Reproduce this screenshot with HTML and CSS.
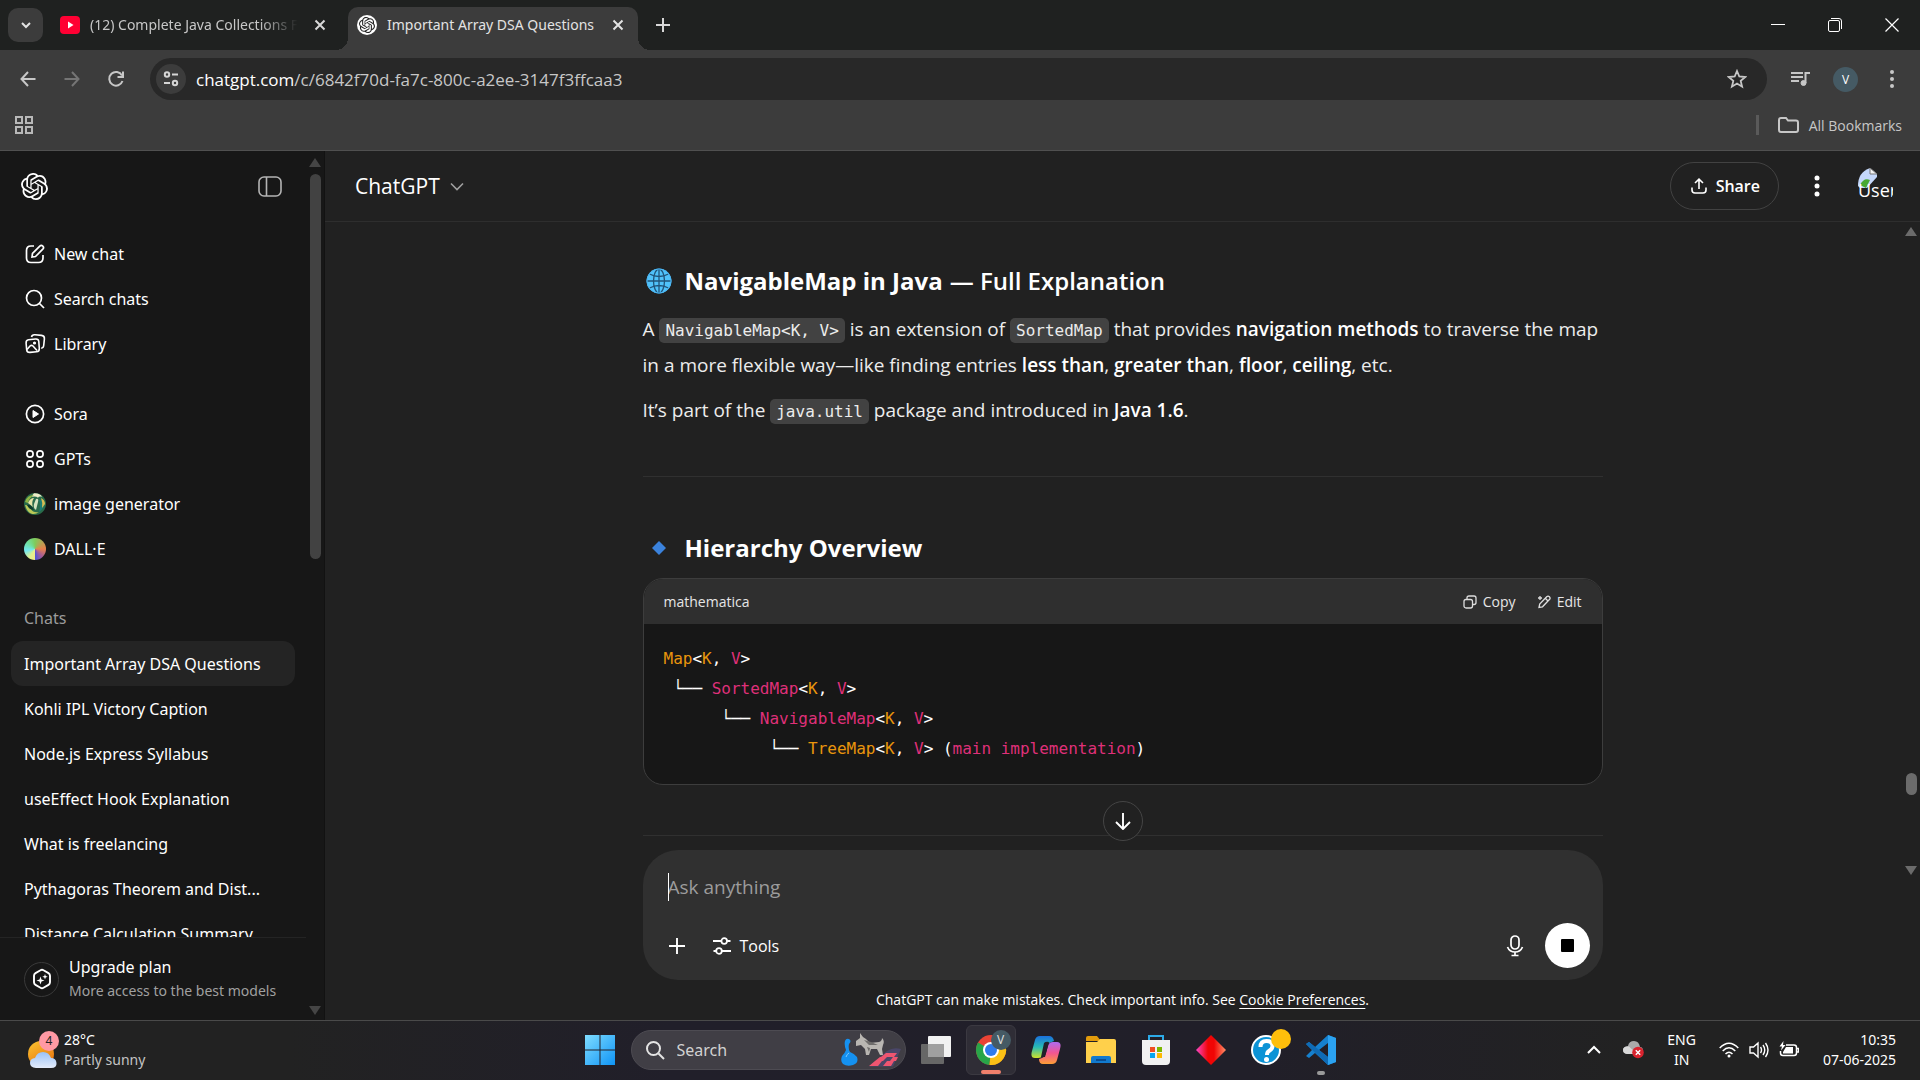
FILE: index.html
```html
<!DOCTYPE html>
<html lang="en">
<head>
<meta charset="utf-8">
<title>Important Array DSA Questions</title>
<link rel="stylesheet" href="styles.css">
</head>
<body>
<svg class="sprite" aria-hidden="true">
  <symbol id="openai" viewBox="0 0 24 24"><path fill="currentColor" d="M22.2819 9.8211a5.9847 5.9847 0 0 0-.5157-4.9108 6.0462 6.0462 0 0 0-6.5098-2.9A6.0651 6.0651 0 0 0 4.9807 4.1818a5.9847 5.9847 0 0 0-3.9977 2.9 6.0462 6.0462 0 0 0 .7427 7.0966 5.98 5.98 0 0 0 .511 4.9107 6.051 6.051 0 0 0 6.5146 2.9001A5.9847 5.9847 0 0 0 13.2599 24a6.0557 6.0557 0 0 0 5.7718-4.2058 5.9894 5.9894 0 0 0 3.9977-2.9001 6.0557 6.0557 0 0 0-.7475-7.0729zm-9.022 12.6081a4.4755 4.4755 0 0 1-2.8764-1.0408l.1419-.0804 4.7783-2.7582a.7948.7948 0 0 0 .3927-.6813v-6.7369l2.02 1.1686a.071.071 0 0 1 .038.052v5.5826a4.504 4.504 0 0 1-4.4945 4.4944zm-9.6607-4.1254a4.4708 4.4708 0 0 1-.5346-3.0137l.142.0852 4.783 2.7582a.7712.7712 0 0 0 .7806 0l5.8428-3.3685v2.3324a.0804.0804 0 0 1-.0332.0615L9.74 19.9502a4.4992 4.4992 0 0 1-6.1408-1.6464zM2.3408 7.8956a4.485 4.485 0 0 1 2.3655-1.9728V11.6a.7664.7664 0 0 0 .3879.6765l5.8144 3.3543-2.0201 1.1685a.0757.0757 0 0 1-.071 0l-4.8303-2.7865A4.504 4.504 0 0 1 2.3408 7.872zm16.5963 3.8558L13.1038 8.364 15.1192 7.2a.0757.0757 0 0 1 .071 0l4.8303 2.7913a4.4944 4.4944 0 0 1-.6765 8.1042v-5.6772a.79.79 0 0 0-.407-.667zm2.0107-3.0231l-.142-.0852-4.7735-2.7818a.7759.7759 0 0 0-.7854 0L9.409 9.2297V6.8974a.0662.0662 0 0 1 .0284-.0615l4.8303-2.7866a4.4992 4.4992 0 0 1 6.6802 4.66zM8.3065 12.863l-2.02-1.1638a.0804.0804 0 0 1-.038-.0567V6.0742a4.4992 4.4992 0 0 1 7.3757-3.4537l-.142.0805L8.704 5.459a.7948.7948 0 0 0-.3927.6813zm1.0976-2.3654l2.602-1.4998 2.6069 1.4998v2.9994l-2.5974 1.4997-2.6067-1.4997Z"/></symbol>
</svg>

<header class="browser">
  <div class="tabstrip">
    <button class="tab-search" aria-label="Search tabs"><svg width="12" height="12" viewBox="0 0 12 12" fill="none" stroke="#e3e3e3" stroke-width="2"><path d="M2 4l4 4 4-4"/></svg></button>
    <div class="tab">
      <svg width="20" height="20" viewBox="0 0 20 20"><rect y="1" width="20" height="18" rx="4" fill="#f03"/><path d="M8 6.500l5.500 3.500L8 13.500z" fill="#fff"/></svg>
      <span class="tab-title tab-title-faded">(12) Complete Java Collections F</span>
      <button class="icon-btn tab-close" aria-label="Close tab"><svg width="12" height="12" viewBox="0 0 12 12" stroke="#d8d8d8" stroke-width="2"><path d="M1.500 1.500l9 9M10.500 1.500l-9 9"/></svg></button>
    </div>
    <div class="tab tab-active">
      <span class="favicon"><svg width="16" height="16"><use href="#openai"/></svg></span>
      <span class="tab-title">Important Array DSA Questions</span>
      <button class="icon-btn tab-close" aria-label="Close tab"><svg width="12" height="12" viewBox="0 0 12 12" stroke="#e3e3e3" stroke-width="2"><path d="M1.500 1.500l9 9M10.500 1.500l-9 9"/></svg></button>
    </div>
    <button class="icon-btn new-tab" aria-label="New tab"><svg width="14" height="14" viewBox="0 0 14 14" stroke="#d8d8d8" stroke-width="2"><path d="M7 0v14M0 7h14"/></svg></button>
    <div class="window-controls">
      <button class="icon-btn" aria-label="Minimize"><svg width="14" height="14" viewBox="0 0 14 14" stroke="#fff"><path d="M0 6.500h14"/></svg></button>
      <button class="icon-btn" aria-label="Restore"><svg width="14" height="14" viewBox="0 0 14 14" fill="none" stroke="#fff"><rect x=".5" y="2.500" width="11" height="11" rx="1.500"/><path d="M3 .5h8q2.500 0 2.500 2.500v8"/></svg></button>
      <button class="icon-btn" aria-label="Close"><svg width="14" height="14" viewBox="0 0 14 14" stroke="#fff" stroke-width="1.200"><path d="M.5.5l13 13M13.500.5l-13 13"/></svg></button>
    </div>
  </div>
  <div class="toolbar">
    <div class="nav-buttons">
      <button class="icon-btn" aria-label="Back"><svg width="16" height="16" viewBox="0 0 16 16" fill="none" stroke="#c7c7c7" stroke-width="2"><path d="M15.500 8H2M8 1L1.500 8 8 15"/></svg></button>
      <button class="icon-btn" aria-label="Forward"><svg width="16" height="16" viewBox="0 0 16 16" fill="none" stroke="#757575" stroke-width="2"><path d="M.5 8H14M8 1l6.500 7L8 15"/></svg></button>
      <button class="icon-btn" aria-label="Reload"><svg width="18" height="18" viewBox="0 0 18 18" fill="none" stroke="#c7c7c7" stroke-width="2"><path d="M15.500 11A6.800 6.800 0 1 1 15 5.500M16 1.500V7h-5.500"/></svg></button>
    </div>
    <div class="address">
      <button class="site-info" aria-label="Site information"><svg width="18" height="18" viewBox="0 0 18 18" fill="none" stroke="#d5d5d5" stroke-width="2"><circle cx="5" cy="4.500" r="2.200"/><path d="M10 4.500h6M2 13h6"/><circle cx="13" cy="13" r="2.200"/></svg></button>
      <a class="url" href="#"><span class="url-host">chatgpt.com</span>/c/6842f70d-fa7c-800c-a2ee-3147f3ffcaa3</a>
      <button class="icon-btn" aria-label="Bookmark"><svg width="20" height="20" viewBox="0 0 20 20" fill="none" stroke="#c7c7c7" stroke-width="1.800"><path d="M10 2l2.300 5.500 6 .5-4.600 3.900 1.400 5.800L10 14.600l-5.100 3.100 1.400-5.800L1.700 8l6-.5z"/></svg></button>
    </div>
    <div class="toolbar-actions">
      <button class="icon-btn" aria-label="Media"><svg width="20" height="16" viewBox="0 0 20 16" fill="none" stroke="#c7c7c7" stroke-width="2"><path d="M0 2h12M0 6h12M0 10h8M14.500 12V2H19"/><circle cx="12.500" cy="12" r="2.500" fill="#c7c7c7" stroke-width="1"/></svg></button>
      <button class="profile" aria-label="Profile">V</button>
      <button class="icon-btn menu" aria-label="Menu"><svg width="6" height="20" viewBox="0 0 6 20" fill="#c7c7c7"><circle cx="3" cy="3" r="2"/><circle cx="3" cy="10" r="2"/><circle cx="3" cy="17" r="2"/></svg></button>
    </div>
  </div>
  <div class="bookmarks">
    <button class="icon-btn" aria-label="Apps"><svg width="18" height="18" viewBox="0 0 18 18" fill="none" stroke="#b8b8b8" stroke-width="2"><path d="M1 1h6v6H1zM11 1h6v6h-6zM1 11h6v6H1zM11 11h6v6h-6z"/></svg></button>
    <button class="all-bookmarks"><svg width="21" height="16" viewBox="0 0 21 16" fill="none" stroke="#c7c7c7" stroke-width="2"><path d="M1 3q0-2 2-2h5l2 2.500h8q2 0 2 2V13q0 2-2 2H3q-2 0-2-2z"/></svg>All Bookmarks</button>
  </div>
</header>

<div class="app">
  <aside class="sidebar">
    <div class="sidebar-main">
      <div class="sidebar-top">
        <a href="#" class="logo" aria-label="Home"><svg width="27" height="27"><use href="#openai"/></svg></a>
        <button class="icon-btn" aria-label="Toggle sidebar"><svg width="24" height="21" viewBox="0 0 24 21" fill="none" stroke="#b4b4b4" stroke-width="1.600"><rect x="1" y="1" width="22" height="19" rx="5"/><path d="M8.500 1v19"/></svg></button>
      </div>
      <nav class="sidebar-scroll">
        <ul class="nav-list">
          <li><a href="#"><svg width="22" height="22" viewBox="0 0 22 22" fill="none" stroke="#fff" stroke-width="1.700"><path d="M10 3H7Q2.500 3 2.500 7.500V15q0 4.500 4.500 4.500h7.500q4.500 0 4.500-4.500v-3"/><path d="M8 14l.5-3.500 7.300-7.300a2.100 2.100 0 0 1 3 3L11.500 13.500z"/></svg>New chat</a></li>
          <li><a href="#"><svg width="22" height="22" viewBox="0 0 22 22" fill="none" stroke="#fff" stroke-width="1.700"><circle cx="10" cy="10" r="7.500"/><path d="M15.500 15.500l4.500 4.500"/></svg>Search chats</a></li>
          <li><a href="#"><svg width="22" height="22" viewBox="0 0 22 22" fill="none" stroke="#fff" stroke-width="1.600"><path d="M4.500 6.800l7-.8q3-.3 3.300 2.500l.5 7q.2 3-2.800 3.300l-6.500.6q-3 .2-3.300-2.600l-.6-6.500q-.2-3.200 2.400-3.500z"/><path d="M3 16.500l3-3.500q1.500-1.400 3 0l4 4.500"/><circle cx="10.500" cy="10" r=".8" fill="#fff"/><path d="M7.500 4Q8 1.500 11 1.800l6.500.6q3.200.4 2.900 3.400l-.7 6.700q-.3 2.500-2.500 2.700"/></svg>Library</a></li>
        </ul>
        <ul class="nav-list">
          <li><a href="#"><svg width="22" height="22" viewBox="0 0 22 22" fill="none" stroke="#fff" stroke-width="1.700"><circle cx="11" cy="11" r="8.600"/><path d="M9 7.500l5.500 3.500L9 14.500z" fill="#fff" stroke-width="1"/></svg>Sora</a></li>
          <li><a href="#"><svg width="22" height="22" viewBox="0 0 22 22" fill="none" stroke="#fff" stroke-width="1.700"><circle cx="6" cy="6" r="3.100"/><circle cx="16" cy="6" r="3.100"/><circle cx="6" cy="16" r="3.100"/><circle cx="16" cy="16" r="3.100"/></svg>GPTs</a></li>
          <li><a href="#"><svg width="22" height="22" viewBox="0 0 22 22"><circle cx="11" cy="11" r="11" fill="#2a6b4a"/><path d="M10 .3q6-.3 8 3.500-3-1-4 1-2-2-6-1 0-2 2-3.500z" fill="#efecc8"/><path d="M1 9q2-7 9-7-5 3-6 8z" fill="#8fb544"/><path d="M4 10q2-5 6-5-3 4-1 9z" fill="#e6e3a6"/><path d="M12 6q3-1 2 3t-2 8q-3-2-2-6z" fill="#d5e3c0"/><path d="M15 7q4-1 6 3-1 6-6 9 2-6 0-12z" fill="#1d7d74"/><path d="M1 12q4 0 6 4t8 3q-4 3-8 1.500T1 12z" fill="#bac857"/><path d="M3 12q4-1 7 5-5 0-7-5z" fill="#0d3a2c"/><path d="M17 5q4 2 4 6l-3 4q1-5-1-10z" fill="#d8bd52"/></svg>image generator</a></li>
          <li><a href="#"><span class="dalle"></span>DALL·E</a></li>
        </ul>
        <h2 class="chats-label">Chats</h2>
        <ul class="chat-list">
          <li><a class="current" href="#">Important Array DSA Questions</a></li>
          <li><a href="#">Kohli IPL Victory Caption</a></li>
          <li><a href="#">Node.js Express Syllabus</a></li>
          <li><a href="#">useEffect Hook Explanation</a></li>
          <li><a href="#">What is freelancing</a></li>
          <li><a href="#">Pythagoras Theorem and Dist...</a></li>
          <li><a href="#">Distance Calculation Summary</a></li>
        </ul>
      </nav>
      <button class="upgrade">
        <span class="upgrade-icon"><svg width="22" height="22" viewBox="0 0 22 22" fill="none" stroke="#fff" stroke-width="1.900"><path d="M9.500 2.200q1.500-.9 3 0l5 2.900q1.500.9 1.500 2.600v6.600q0 1.700-1.500 2.600l-5 2.900q-1.500.9-3 0l-5-2.900Q3 16 3 14.300V7.700q0-1.700 1.500-2.600z"/><path d="M9.500 8.500l1 3 3 1-3 1-1 3-1-3-3-1 3-1z" fill="#fff" stroke="none"/><path d="M14 6l.7 2 2 .7-2 .7-.7 2-.7-2-2-.7 2-.7z" fill="#fff" stroke="none"/></svg></span>
        <span class="upgrade-text"><span>Upgrade plan</span><small>More access to the best models</small></span>
      </button>
    </div>
    <div class="scrollbar sidebar-bar" aria-hidden="true">
      <span class="arrow arrow-up"></span><span class="thumb"></span><span class="arrow arrow-down"></span>
    </div>
  </aside>

  <main class="main">
    <div class="chat-header">
      <button class="model">ChatGPT<svg width="14" height="9" viewBox="0 0 14 9" fill="none" stroke="#a0a0a0" stroke-width="1.600"><path d="M1 1.500l6 6 6-6"/></svg></button>
      <div class="chat-actions">
        <button class="share"><svg width="16" height="16" viewBox="0 0 16 16" fill="none" stroke="#fff" stroke-width="1.600"><path d="M8 11V1.500M4 5l4-3.800L12 5M1 9.500V12q0 3 3 3h8q3 0 3-3V9.500"/></svg>Share</button>
        <button class="icon-btn" aria-label="More"><svg width="6" height="22" viewBox="0 0 6 22" fill="#fff"><circle cx="3" cy="3" r="2.500"/><circle cx="3" cy="11" r="2.500"/><circle cx="3" cy="19" r="2.500"/></svg></button>
        <button class="avatar" aria-label="Account"><svg width="20" height="20" viewBox="0 0 20 20"><path d="M0 18Q0 4 12 0l7 6v3L9 20H2z" fill="#c5d8fb"/><path d="M2 17q4-8 10-5l-4 8z" fill="#47a832"/><path d="M12 0v6h7z" fill="#f4f4f4" stroke="#777"/></svg><span>User</span></button>
      </div>
    </div>

    <div class="chat-body">
      <div class="thread">
        <article class="message">
          <h2><svg class="emoji" width="26" height="26" viewBox="0 0 26 26"><circle cx="13" cy="13" r="12.500" fill="#50c2fa"/><g fill="none" stroke="#21547a" stroke-width="1.300"><ellipse cx="13" cy="13" rx="5.500" ry="12"/><path d="M13 1v24M1 13h24M3.500 6q9.500 5 19 0M3.500 20q9.500-5 19 0"/></g><circle cx="13" cy="13" r="12" fill="none" stroke="#4cb5f3"/></svg><strong>NavigableMap in Java</strong> — Full Explanation</h2>
          <p>A <code>NavigableMap&lt;K, V&gt;</code> is an extension of <code>SortedMap</code> that provides <strong>navigation methods</strong> to traverse the map in a more flexible way—like finding entries <strong>less than</strong>, <strong>greater than</strong>, <strong>floor</strong>, <strong>ceiling</strong>, etc.</p>
          <p>It’s part of the <code>java.util</code> package and introduced in <strong>Java 1.6</strong>.</p>
          <hr>
          <h2><svg class="emoji" width="26" height="26" viewBox="0 0 26 26"><path d="M13 6l7 7-7 7-7-7z" fill="#3b82dc"/></svg><strong>Hierarchy Overview</strong></h2>
          <div class="code-block">
            <div class="code-head">
              <span>mathematica</span>
              <div class="code-actions">
                <button><svg width="14" height="14" viewBox="0 0 14 14" fill="none" stroke="#ddd" stroke-width="1.300"><rect x="1" y="4.500" width="8.500" height="8.500" rx="2"/><path d="M4 4V3q0-2 2-2h5q2 0 2 2v4.500q0 2-2 2h-1"/></svg>Copy</button>
                <button><svg width="14" height="14" viewBox="0 0 14 14" fill="none" stroke="#ddd" stroke-width="1.300"><path d="M2 12.500l.7-3.500 7-7.200a1.900 1.900 0 0 1 2.700 2.700L5.500 11.800zM8.500 3.500L11 6"/><path d="M3 1v4M1 3h4"/></svg>Edit</button>
              </div>
            </div>
            <pre><span class="ty">Map</span>&lt;<span class="ty">K</span>, <span class="id">V</span>&gt;
 └── <span class="id">SortedMap</span>&lt;<span class="ty">K</span>, <span class="id">V</span>&gt;
      └── <span class="id">NavigableMap</span>&lt;<span class="ty">K</span>, <span class="id">V</span>&gt;
           └── <span class="ty">TreeMap</span>&lt;<span class="ty">K</span>, <span class="id">V</span>&gt; (<span class="id">main implementation</span>)</pre>
          </div>
          <hr class="last-rule">
          <button class="to-bottom" aria-label="Scroll to bottom"><svg width="18" height="18" viewBox="0 0 18 18" fill="none" stroke="#fff" stroke-width="1.900"><path d="M9 1v15.500M2 10l7 7 7-7"/></svg></button>
        </article>
      </div>
      <div class="scrollbar main-bar" aria-hidden="true">
        <span class="arrow arrow-up"></span><span class="thumb"></span><span class="arrow arrow-down"></span>
      </div>
    </div>

    <div class="composer-wrap">
      <form class="composer">
        <div class="prompt">
          <textarea rows="1" placeholder="Ask anything" aria-label="Message"></textarea>
          <span class="caret"></span>
        </div>
        <div class="composer-row">
          <button type="button" class="icon-btn" aria-label="Add"><svg width="18" height="18" viewBox="0 0 18 18" stroke="#fff" stroke-width="1.900"><path d="M9 1v16M1 9h16"/></svg></button>
          <button type="button" class="tools"><svg width="18" height="18" viewBox="0 0 18 18" fill="none" stroke="#fff" stroke-width="1.800"><path d="M0 4h8M14 4h3.500M.5 14h2.500M9 14h9"/><circle cx="11.200" cy="4" r="2.800"/><circle cx="6" cy="14" r="2.800"/></svg>Tools</button>
          <button type="button" class="icon-btn mic" aria-label="Dictate"><svg width="18" height="22" viewBox="0 0 18 22" fill="none" stroke="#fff" stroke-width="1.700"><rect x="5" y="1" width="8" height="13" rx="4"/><path d="M1.500 12q2 5 7.500 5t7.500-5M9 17v3.500M5.500 20.500h7"/></svg></button>
          <button type="button" class="stop" aria-label="Stop"><span></span></button>
        </div>
      </form>
      <p class="disclaimer">ChatGPT can make mistakes. Check important info. See <a href="#">Cookie Preferences</a>.</p>
    </div>
  </main>
</div>

<footer class="taskbar">
  <button class="weather">
    <span class="weather-icon"><svg width="30" height="38" viewBox="0 0 30 38"><defs><linearGradient id="sun" x1="0" y1="0" x2="0.600" y2="1"><stop offset="0" stop-color="#fcc531"/><stop offset="1" stop-color="#e8770f"/></linearGradient><linearGradient id="cl" x1="0" y1="0" x2="0" y2="1"><stop offset="0" stop-color="#9ac2f6"/><stop offset="1" stop-color="#e4ecfb"/></linearGradient></defs><circle cx="13" cy="23" r="13" fill="url(#sun)"/><path d="M8 37q-6-.5-6-5t5-5q2-6 8-6t8 6q5 0 5.500 5t-5.500 5z" fill="url(#cl)"/></svg><span class="badge">4</span></span>
    <span class="two-line"><span>28°C</span><span class="dim">Partly sunny</span></span>
  </button>
  <div class="dock">
    <button class="icon-btn dock-app start" aria-label="Start"><svg width="30" height="30" viewBox="0 0 30 30"><defs><linearGradient id="win" x1="0" y1="0" x2="1" y2="1"><stop offset="0" stop-color="#7fdcff"/><stop offset="1" stop-color="#0f94f5"/></linearGradient></defs><path fill="url(#win)" d="M0 0h14.500v14.500H0zM15.500 0H30v14.500H15.500zM0 15.500h14.500V30H0zM15.500 15.500H30V30H15.500z"/></svg></button>
    <label class="task-search">
      <svg width="20" height="20" viewBox="0 0 20 20" fill="none" stroke="#e4e4e4" stroke-width="2"><circle cx="8.500" cy="8.500" r="6.500"/><path d="M13.500 13.500L19 19"/></svg>
      <input type="text" placeholder="Search" aria-label="Search">
      <svg width="60" height="34" viewBox="0 0 60 34"><path d="M28 33.500L46 18q6-4 14-2l-8 17.500z" fill="#4a4668"/><path d="M34 28l5-4h7l-4 4zM49 28l3-4h5l-2 4zM42 33l4-5h7l-3 5zM46 24l4-4h6l-3 4zM40 24l5-4h5l-4 4zM28 33l6-5h7l-4 5z" fill="#ee5570"/><path d="M4 8q1-3 4-2 3 2 0 5-1 5 1 8 5 2 7 5 2 6-4 8-6 2-10-1-3-3-1-8 3-3 4-6-2-5-1-9z" fill="#1591f0"/><path d="M5 24q1-3 3-4" stroke="#7cc8ff" fill="none"/><path d="M15 8l4-3V0l3 4 3 2 4 4 9-1q3-1 3-4 3 3 1 7l-1 4 1 6h-3l-3-6h-6l-2 6h-3l-1-6-4-4-5 1z" fill="#b9b6b2"/><path d="M23 7l5 5 9 0-7-3zM26 14l3 1-1 4z" fill="#6f6d6c"/></svg>
    </label>
    <button class="icon-btn dock-app" aria-label="Task view"><svg width="32" height="30" viewBox="0 0 32 30"><rect x="8" y="1" width="23" height="21" rx="1" fill="#f2f2f2"/><rect x="1" y="9" width="23" height="20" rx="1" fill="#676767"/><path d="M8 9h16v13H8z" fill="#a0a0a0"/></svg></button>
    <button class="icon-btn dock-app running" aria-label="Chrome"><svg width="32" height="32" viewBox="0 0 32 32"><circle cx="16" cy="16" r="15" fill="#ea4335"/><path d="M16 16L3 8.500A15 15 0 0 0 14.500 31z" fill="#28a549"/><path d="M16 16l-1.500 15A15 15 0 0 0 29 8.500H16z" fill="#fbc116"/><circle cx="16" cy="16" r="8" fill="#fff"/><circle cx="16" cy="16" r="6" fill="#2f7bed"/></svg><span class="user-badge">V</span></button>
    <button class="icon-btn dock-app" aria-label="Copilot"><svg width="30" height="28" viewBox="0 0 30 28"><defs><linearGradient id="c1" x1="0" y1="0" x2="0" y2="1"><stop offset="0" stop-color="#1b70dd"/><stop offset=".5" stop-color="#27bab5"/><stop offset="1" stop-color="#cde22b"/></linearGradient><linearGradient id="c2" x1="0" y1="0" x2="0" y2="1"><stop offset="0" stop-color="#ae6bf0"/><stop offset=".5" stop-color="#f35591"/><stop offset="1" stop-color="#fd9e35"/></linearGradient></defs><path d="M9 0h9q4 0 5 5l-5 2q-3 0-4 4l-2 8q-1 3-5 3H4q-5 0-3-7L4 4q1-4 5-4z" fill="url(#c1)"/><path d="M21 28h-9q-4 0-4-5l3-1q3-1 4-5l2-7q1-4 5-4h4q5 0 3 7l-3 11q-1 4-5 4z" fill="url(#c2)"/><path d="M13 7q2-2 5-1l-4 15h-4z" fill="#22202a"/></svg></button>
    <button class="icon-btn dock-app" aria-label="File Explorer"><svg width="32" height="28" viewBox="0 0 32 28"><path d="M1 2q0-2 2-2h9l4 5H1z" fill="#e29b0c"/><path d="M1 6h11l3-3h14q2 0 2 2v22H1z" fill="#ffd04b"/><path d="M6 27v-5q0-2 2-2h16q2 0 2 2v5z" fill="#127ace"/><path d="M11 24h10" stroke="#0a4e93" stroke-width="2"/></svg></button>
    <button class="icon-btn dock-app" aria-label="Store"><svg width="30" height="30" viewBox="0 0 30 30"><path d="M8 6V1h14v5" fill="none" stroke="#2caae8" stroke-width="2"/><path d="M1 5h28v21q0 4-4 4H5q-4 0-4-4z" fill="#f1f1f1"/><path d="M9 12h5v5H9z" fill="#f04e23"/><path d="M16 12h5v5h-5z" fill="#7db801"/><path d="M9 18h5v5H9z" fill="#06a5ef"/><path d="M16 18h5v5h-5z" fill="#fdb900"/></svg></button>
    <button class="icon-btn dock-app" aria-label="Diamond"><svg width="30" height="30" viewBox="0 0 30 30"><defs><linearGradient id="dm"><stop offset="0" stop-color="#fa48c8"/><stop offset=".4" stop-color="#f00505"/><stop offset=".6" stop-color="#f00505"/><stop offset="1" stop-color="#ff9068"/></linearGradient></defs><path d="M15 0l15 15-15 15L0 15z" fill="url(#dm)"/></svg></button>
    <button class="icon-btn dock-app" aria-label="Help"><svg width="30" height="30" viewBox="0 0 30 30"><circle cx="15" cy="15" r="14" fill="#0c93d6" stroke="#fff" stroke-width="2"/><path d="M9.500 12q0-6 6-6t6 5q0 3-3.500 5-2 1.200-2 4" fill="none" stroke="#fff" stroke-width="4"/><circle cx="15.500" cy="24.500" r="2.500" fill="#fff"/></svg><span class="alert-dot"></span></button>
    <button class="icon-btn dock-app idle" aria-label="Visual Studio Code"><svg width="30" height="30" viewBox="0 0 30 30"><path fill-rule="evenodd" d="M22 0l8 3v24l-8 3L9 18l-6 5-3-2 6-6-6-6 3-2 6 5zM22 8l-9 7 9 7z" fill="#1681cf"/><path d="M0 9l3-2 19 15v8z" fill="#0f6bb5"/><path d="M22 0l8 3v24l-8 3z" fill="#2ba2f1"/></svg></button>
  </div>
  <div class="tray">
    <button class="icon-btn tray-up" aria-label="Hidden icons"><svg width="14" height="10" viewBox="0 0 14 10" fill="none" stroke="#fff" stroke-width="2"><path d="M1 8l6-6 6 6"/></svg></button>
    <button class="icon-btn tray-cloud" aria-label="OneDrive"><svg width="22" height="20" viewBox="0 0 22 20"><path d="M4 14q-4-.5-4-4t5-4q1-5 6-5t6 6q3 0 3 4t-4 3z" fill="#aaa"/><path d="M4 14q-4-.5-4-4 0-4 6-3.500l8 7.500z" fill="#d8d8d8"/><circle cx="15" cy="12.500" r="5.800" fill="#d9232e"/><path d="M12.800 10.300l4.400 4.400M17.200 10.300l-4.400 4.400" stroke="#fff" stroke-width="1.400"/></svg></button>
    <button class="two-line lang"><span>ENG</span><span>IN</span></button>
    <button class="tray-status" aria-label="Network, sound and battery">
      <svg width="20" height="16" viewBox="0 0 20 16" fill="none" stroke="#fff" stroke-width="1.500"><path d="M.7 6q9.300-9.500 18.600 0M3.700 9q6.300-6.500 12.600 0M6.500 12q3.500-3.500 7 0"/><circle cx="10" cy="14" r="1.500" fill="#fff" stroke="none"/></svg>
      <svg width="20" height="18" viewBox="0 0 20 18" fill="none" stroke="#fff" stroke-width="1.400"><path d="M1 6h3.500L9 2v14l-4.500-4H1zM11.500 6q2 3 0 6M14 4q3.500 5 0 10M16.500 2q5 7 0 14"/></svg>
      <svg width="20" height="18" viewBox="0 0 20 18" fill="none" stroke="#fff" stroke-width="1.500"><path d="M7 4h8q2.500 0 2.500 2.500V12q0 2.500-2.500 2.500H4Q1.500 14.500 1.500 12v-2M18 7.500h1.500v3.500H18"/><path d="M7 6h7v6.500H4V11z" fill="#fff" stroke="none"/><path d="M4.500 0L.5 5.500H3L2 9.500 6.500 4H4z" fill="#fff" stroke="none"/></svg>
    </button>
    <button class="two-line clock"><span>10:35</span><span>07-06-2025</span></button>
  </div>
</footer>
</body>
</html>
```
FILE: styles.css
```css
* { box-sizing: border-box; }

body {
  margin: 0;
  height: 100vh;
  display: flex;
  flex-direction: column;
  overflow: hidden;
  background: #212121;
  color: #fff;
  font-family: "Open Sans", "Noto Sans", sans-serif;
  font-size: 16px;
}

button, input, textarea {
  font: inherit;
  color: inherit;
  background: none;
  border: 0;
  padding: 0;
  margin: 0;
  outline: 0;
}

a { color: inherit; text-decoration: none; }
ul { list-style: none; margin: 0; padding: 0; }
svg { display: block; flex: none; }
.sprite { width: 0; height: 0; position: absolute; }

.icon-btn {
  display: flex;
  align-items: center;
  justify-content: center;
  flex: none;
}

/* Browser frame */
.browser { flex: none; background: #3c3c3c; border-bottom: 1px solid #505050; }

.tabstrip {
  display: flex;
  align-items: center;
  height: 50px;
  padding-left: 8px;
  background: #1f2120;
}

.tab-search {
  width: 35px;
  height: 34px;
  border-radius: 10px;
  background: #3c3c3c;
  display: flex;
  align-items: center;
  justify-content: center;
}

.tab {
  display: flex;
  align-items: center;
  width: 305px;
  height: 43px;
  align-self: flex-end;
  padding: 0 20px 8px 17px;
  gap: 10px;
  font-family: "Noto Sans", sans-serif;
  font-size: 14px;
  color: #c7c7c7;
}

.tab-active {
  position: relative;
  width: 290px;
  padding: 0 12px 8px 9px;
  border-radius: 10px 10px 0 0;
  background: #3c3c3c;
  color: #e3e3e3;
}

.tab-active::before, .tab-active::after {
  content: "";
  position: absolute;
  bottom: 0;
  width: 12px;
  height: 12px;
}
.tab-active::before { left: -12px; background: radial-gradient(circle at 0 0, transparent 12px, #3c3c3c 12px); }
.tab-active::after { right: -12px; background: radial-gradient(circle at 100% 0, transparent 12px, #3c3c3c 12px); }

.tab-title { flex: 1; white-space: nowrap; overflow: hidden; }
.tab-title-faded {
  -webkit-mask-image: linear-gradient(90deg, #000 80%, transparent 98%);
  mask-image: linear-gradient(90deg, #000 80%, transparent 98%);
}
.tab-close { width: 16px; }

.favicon {
  display: flex;
  align-items: center;
  justify-content: center;
  width: 20px;
  height: 20px;
  border-radius: 50%;
  background: #fff;
  color: #222;
}

.new-tab { width: 50px; }
.window-controls { display: flex; margin-left: auto; }
.window-controls .icon-btn { width: 57px; height: 48px; }

.toolbar { display: flex; align-items: center; height: 50px; padding-top: 8px; }
.nav-buttons { display: flex; width: 150px; padding-left: 6px; }
.nav-buttons .icon-btn { width: 44px; }

.address {
  flex: 1;
  display: flex;
  align-items: center;
  gap: 10px;
  height: 42px;
  padding: 0 20px 0 6px;
  border-radius: 21px;
  background: #282828;
}

.site-info {
  display: flex;
  align-items: center;
  justify-content: center;
  width: 30px;
  height: 30px;
  border-radius: 50%;
  background: #3c3c3c;
}

.url { flex: 1; color: #c7c7c7; font-size: 17px; }
.url-host { color: #fff; }

.toolbar-actions { display: flex; align-items: center; gap: 22px; padding: 0 16px 0 24px; }
.profile {
  width: 25px;
  height: 25px;
  border-radius: 50%;
  background: #455a64;
  font-size: 12px;
}
.menu { width: 24px; }

.bookmarks {
  display: flex;
  align-items: center;
  justify-content: space-between;
  height: 50px;
  padding: 0 18px 0 15px;
}
.all-bookmarks {
  display: flex;
  align-items: center;
  gap: 10px;
  height: 20px;
  padding-left: 19px;
  border-left: 3px solid #5a5a5a;
  color: #c7c7c7;
  font-size: 14px;
}

/* App shell */
.app { flex: 1; min-height: 0; display: flex; }

.sidebar {
  flex: none;
  display: flex;
  width: 325px;
  background: #171717;
  border-right: 1px solid #121212;
  font-family: "Noto Sans", sans-serif;
}
.sidebar-main { flex: 1; min-width: 0; display: flex; flex-direction: column; }
.sidebar-top {
  flex: none;
  display: flex;
  align-items: center;
  justify-content: space-between;
  height: 70px;
  padding: 0 24px 0 21px;
}
.logo { display: flex; }

.sidebar-scroll { flex: 1; min-height: 0; overflow: hidden; padding: 10px 11px 0; }
.nav-list { margin-bottom: 25px; }
.nav-list a, .chat-list a {
  display: flex;
  align-items: center;
  gap: 8px;
  height: 45px;
  padding: 0 13px;
  border-radius: 12px;
  white-space: nowrap;
}
.dalle {
  width: 22px;
  height: 22px;
  border-radius: 50%;
  background: conic-gradient(#7ecb5a, #e8804c 90deg, #a05a9a 140deg, #4a52d8 180deg, #f2e98a 181deg, #dff090 215deg, #74e8f0 260deg, #6fe0a0 310deg, #7ecb5a);
}
.chats-label {
  margin: 0;
  padding-left: 13px;
  font-size: 16px;
  font-weight: 400;
  line-height: 45px;
  color: #9b9b9b;
}
.current { background: #242424; }

.upgrade {
  flex: none;
  display: flex;
  align-items: center;
  gap: 10px;
  height: 83px;
  padding: 0 24px;
  border-top: 1px solid #242424;
  text-align: left;
}
.upgrade-icon {
  display: flex;
  align-items: center;
  justify-content: center;
  width: 35px;
  height: 35px;
  border: 1px solid #3a3a3a;
  border-radius: 50%;
}
.upgrade-text { display: flex; flex-direction: column; line-height: 24px; white-space: nowrap; }
.upgrade-text small { font-size: 14px; color: #a0a0a0; }

.scrollbar {
  flex: none;
  display: flex;
  flex-direction: column;
  align-items: center;
  width: 18px;
}
.thumb { border-radius: 6px; }
.arrow { border: 6px solid transparent; width: 0; height: 0; }
.arrow-up { border-top: 0; border-bottom: 9px solid; }
.arrow-down { border-bottom: 0; border-top: 9px solid; margin-top: auto; }
.sidebar-bar { padding: 7px 0 5px; color: #454545; }
.sidebar-bar .thumb { width: 11px; height: 385px; margin-top: 7px; background: #424242; }
.main-bar { padding: 5px 0; color: #6b6b6b; }
.main-bar .thumb { width: 11px; height: 22px; margin-top: 537px; background: #6b6b6b; }

/* Conversation */
.main { flex: 1; min-width: 0; display: flex; flex-direction: column; }
.chat-header {
  flex: none;
  display: flex;
  align-items: center;
  justify-content: space-between;
  height: 71px;
  padding: 0 25px 0 30px;
  border-bottom: 1px solid #2e2e2e;
}
.model { display: flex; align-items: center; gap: 10px; font-size: 21px; }
.chat-actions { display: flex; align-items: center; gap: 35px; }
.share {
  display: flex;
  align-items: center;
  gap: 9px;
  height: 48px;
  padding: 0 18px 0 20px;
  border: 1px solid #424242;
  border-radius: 24px;
  font-weight: 600;
}
.avatar {
  position: relative;
  width: 40px;
  height: 40px;
  overflow: hidden;
  border-radius: 50%;
}
.avatar svg { position: absolute; left: 3px; top: 2px; }
.avatar span { position: absolute; left: 3px; top: 10px; font-size: 18px; line-height: 28px; width: 35px; overflow: hidden; }

.chat-body { flex: 1; min-height: 0; display: flex; }
.thread { flex: 1; min-width: 0; overflow: hidden; padding: 0 0 0 18px; }
.message, .composer-wrap { width: 960px; max-width: 100%; margin: 0 auto; }
.message { position: relative; padding-top: 41px; }

.message h2 {
  display: flex;
  align-items: center;
  gap: 7px;
  margin: 0 0 12px;
  font-size: 24px;
  line-height: 36px;
  font-weight: 600;
}
.message h2 strong { font-weight: 700; }
.emoji { margin: 0 6px 0 3px; }
.message p {
  margin: 0 0 9px;
  font-size: 19px;
  line-height: 36px;
  color: #ececec;
}
.message p strong { font-weight: 600; color: #fff; }
code, pre { font-family: "DejaVu Sans Mono", "Liberation Mono", monospace; font-size: 16px; }
code { padding: 3px 6px; border-radius: 5px; background: #424242; line-height: 20px; }
hr { height: 1px; margin: 48px 0 53px; border: 0; background: #303030; }

.code-block { border: 1px solid #3d3d3d; border-radius: 20px; background: #171717; overflow: hidden; }
.code-head {
  display: flex;
  align-items: center;
  justify-content: space-between;
  height: 45px;
  padding: 0 20px;
  background: #2f2f2f;
  font-size: 14px;
  color: #e6e6e6;
}
.code-actions { display: flex; gap: 21px; }
.code-actions button { display: flex; align-items: center; gap: 6px; }
pre { margin: 0; padding: 20px; line-height: 30px; }
.ty { color: #e9950c; }
.id { color: #df3079; }
.last-rule { margin: 50px 0 0; }
.to-bottom {
  position: absolute;
  left: 50%;
  bottom: -5px;
  margin-left: -20px;
  display: flex;
  align-items: center;
  justify-content: center;
  width: 40px;
  height: 40px;
  border: 1px solid #454545;
  border-radius: 50%;
  background: #212121;
}

/* The composer overlaps the foot of the scrolling thread */
.composer-wrap { position: relative; flex: none; margin-top: -30px; }
.composer { height: 130px; border-radius: 35px; background: #303030; padding: 19px 13px 12px 25px; }
.prompt { position: relative; height: 54px; }
.prompt textarea { display: block; width: 100%; height: 36px; resize: none; overflow: hidden; font-size: 19px; line-height: 36px; }
.prompt textarea::placeholder { color: #9c9c9c; opacity: 1; }
.caret { position: absolute; left: 0; top: 4px; width: 1px; height: 28px; background: #fff; }
.composer-row { display: flex; align-items: center; height: 45px; }
.tools { display: flex; align-items: center; gap: 9px; margin-left: 27px; }
.mic { margin-left: auto; }
.stop {
  display: flex;
  align-items: center;
  justify-content: center;
  width: 45px;
  height: 45px;
  margin-left: 21px;
  border-radius: 50%;
  background: #fff;
}
.stop span { width: 13px; height: 13px; border-radius: 1px; background: #000; }
.disclaimer { margin: 0; font-size: 14px; line-height: 40px; text-align: center; }
.disclaimer a { text-decoration: underline; text-underline-offset: 3px; }

/* Taskbar */
.taskbar {
  flex: none;
  display: grid;
  grid-template-columns: 1fr auto 1fr;
  align-items: center;
  height: 60px;
  padding-bottom: 1px;
  border-top: 1px solid #4a4a4a;
  background: linear-gradient(90deg, #222 15%, #211f2a 35%, #211f29 65%, #222 85%);
  font-family: "Noto Sans", sans-serif;
  font-size: 14px;
}
.two-line { display: flex; flex-direction: column; line-height: 20px; }
.dim { color: #c4c4c4; }
.weather { display: flex; align-items: center; gap: 6px; padding-left: 28px; text-align: left; }
.weather-icon { position: relative; }
.badge {
  position: absolute;
  left: 11px;
  top: 0;
  width: 20px;
  height: 20px;
  border-radius: 50%;
  background: #ff99a4;
  color: #222;
  font-size: 12px;
  line-height: 20px;
  text-align: center;
}
.dock { display: flex; align-items: center; gap: 5px; }
.dock-app { position: relative; width: 50px; height: 50px; border-radius: 6px; }
.start { margin-right: 1px; }
.task-search {
  display: flex;
  align-items: center;
  gap: 12px;
  width: 275px;
  height: 40px;
  padding: 0 4px 0 13px;
  border: 1px solid #4d4b52;
  border-radius: 20px;
  background: #403e45;
}
.task-search input { flex: 1; min-width: 0; font-size: 16px; }
.task-search input::placeholder { color: #d2d2d2; opacity: 1; }
.running { background: #2f2d36; border: 1px solid #3b3941; }
.running::after, .idle::after {
  content: "";
  position: absolute;
  bottom: 0;
  width: 20px;
  height: 4px;
  border-radius: 2px;
  background: #f0806c;
}
.idle::after { width: 8px; background: #9a9a9a; }
.user-badge {
  position: absolute;
  right: 4px;
  top: 4px;
  width: 20px;
  height: 20px;
  border-radius: 50%;
  background: #455a64;
  color: #ddd;
  font-size: 12px;
  line-height: 20px;
}
.alert-dot { position: absolute; right: 0; top: 4px; width: 20px; height: 20px; border-radius: 50%; background: #ffbf0b; }

.tray { display: flex; align-items: center; justify-content: flex-end; padding-right: 24px; }
.tray-cloud { margin-left: 22px; }
.lang { margin-left: 22px; align-items: center; }
.tray-status { display: flex; align-items: center; gap: 10px; margin: 0 24px 0 23px; }
.clock { align-items: flex-end; }
```
